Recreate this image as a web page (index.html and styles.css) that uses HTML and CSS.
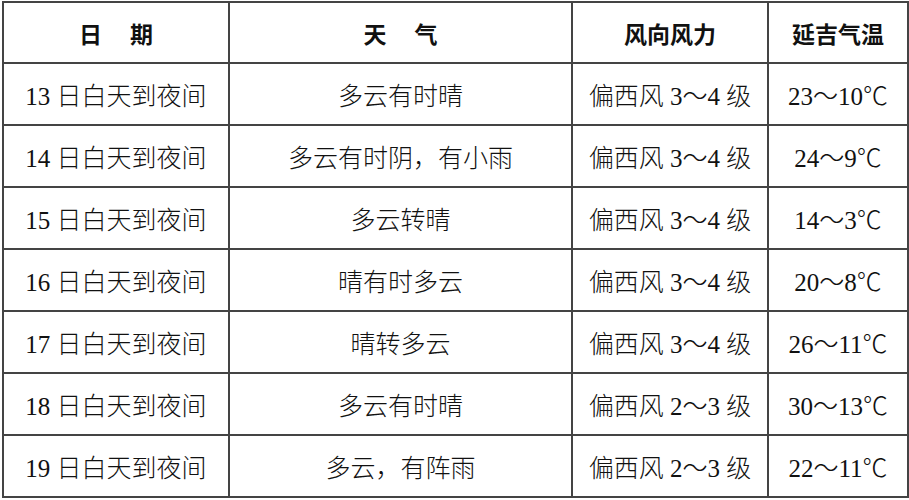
FILE: index.html
```html
<!DOCTYPE html>
<html lang="zh">
<head>
<meta charset="utf-8">
<link rel="stylesheet" href="styles.css">
</head>
<body>
<table class="weather">
  <colgroup>
    <col class="c1"><col class="c2"><col class="c3"><col class="c4">
  </colgroup>
  <thead>
    <tr><th>日　 期</th><th>天　 气</th><th>风向风力</th><th>延吉气温</th></tr>
  </thead>
  <tbody>
    <tr><td>13 日白天到夜间</td><td>多云有时晴</td><td>偏西风 3～4 级</td><td>23～10℃</td></tr>
    <tr><td>14 日白天到夜间</td><td>多云有时阴，有小雨</td><td>偏西风 3～4 级</td><td>24～9℃</td></tr>
    <tr><td>15 日白天到夜间</td><td>多云转晴</td><td>偏西风 3～4 级</td><td>14～3℃</td></tr>
    <tr><td>16 日白天到夜间</td><td>晴有时多云</td><td>偏西风 3～4 级</td><td>20～8℃</td></tr>
    <tr><td>17 日白天到夜间</td><td>晴转多云</td><td>偏西风 3～4 级</td><td>26～11℃</td></tr>
    <tr><td>18 日白天到夜间</td><td>多云有时晴</td><td>偏西风 2～3 级</td><td>30～13℃</td></tr>
    <tr><td>19 日白天到夜间</td><td>多云，有阵雨</td><td>偏西风 2～3 级</td><td>22～11℃</td></tr>
  </tbody>
</table>
</body>
</html>
```
FILE: styles.css
```css
html, body {
  margin: 0;
  padding: 0;
  background: #fff;
}
body {
  padding: 1px 0 0 2px;
}
.weather {
  border-collapse: collapse;
  table-layout: fixed;
  width: 905px;
  color: #111;
}
.c1 { width: 226px; }
.c2 { width: 343px; }
.c3 { width: 196px; }
.c4 { width: 140px; }
.weather th, .weather td {
  border: 2px solid #444;
  text-align: center;
  padding: 0;
  white-space: nowrap;
}
.weather th {
  height: 59px;
  font-family: "Noto Sans CJK SC", sans-serif;
  font-weight: 700;
  font-size: 23px;
}
.weather td {
  height: 60px;
  font-family: "Liberation Serif", "Noto Sans CJK SC", serif;
  font-weight: 300;
  font-size: 25px;
}
```
